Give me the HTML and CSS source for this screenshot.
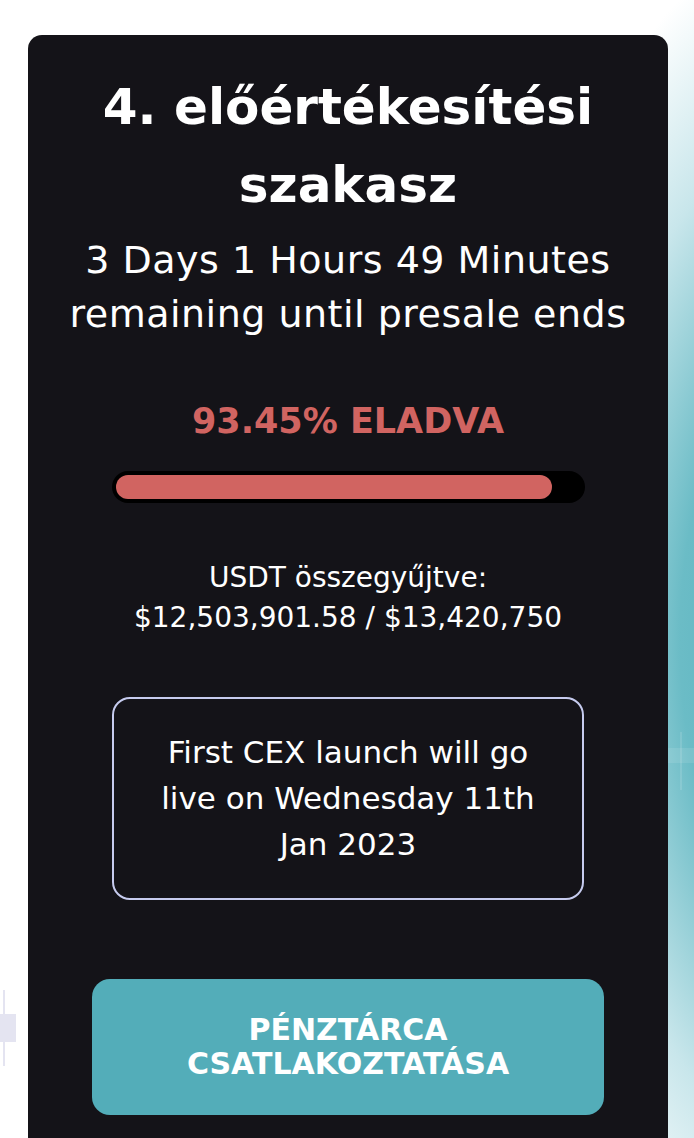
FILE: index.html
```html
<!DOCTYPE html>
<html lang="hu">
<head>
  <meta charset="UTF-8">
  <meta name="viewport" content="width=device-width, initial-scale=1.0">
  <title>Előértékesítés</title>
  <link rel="stylesheet" href="styles.css">
</head>
<body>
  <div class="candle"></div>
  <div class="cross"></div>

  <div class="card">
    <h1 class="title">4. előértékesítési szakasz</h1>
    <p class="countdown">3 Days 1 Hours 49 Minutes remaining until presale ends</p>

    <p class="sold">93.45% ELADVA</p>
    <div class="bar">
      <div class="fill" style="width: 93.8%"></div>
    </div>

    <p class="raised">USDT összegyűjtve:<br>$12,503,901.58 / $13,420,750</p>

    <div class="notice">First CEX launch will go live on Wednesday 11th Jan 2023</div>

    <button class="connect">Pénztárca csatlakoztatása</button>
  </div>
</body>
</html>
```

FILE: styles.css
```css
body {
  margin: 0;
  min-height: 1138px;
  position: relative;
  overflow: hidden;
  font-family: "DejaVu Sans", sans-serif;
  background:
    radial-gradient(ellipse 300px 700px at 800px 640px, #4fb0bd 0%, #6bbcc6 40%, #c8e6eb 72%, rgba(255, 255, 255, 0) 100%),
    #fff;
}
.candle {
  position: absolute;
  left: 3px;
  top: 990px;
  width: 2px;
  height: 76px;
  background: #e4e4f1;
}
.candle::after {
  content: "";
  position: absolute;
  left: -3px;
  top: 24px;
  width: 16px;
  height: 28px;
  background: #e4e4f1;
}
.cross {
  position: absolute;
  left: 680px;
  top: 732px;
  width: 2px;
  height: 58px;
  background: rgba(255, 255, 255, 0.12);
}
.cross::after {
  content: "";
  position: absolute;
  left: -12px;
  top: 16px;
  width: 40px;
  height: 15px;
  background: rgba(255, 255, 255, 0.1);
}
.card {
  margin: 35px 0 0 28px;
  width: 640px;
  box-sizing: border-box;
  padding: 33px 30px 40px;
  background: #141318;
  border-radius: 14px 14px 0 0;
  color: #fff;
  text-align: center;
}
.title {
  margin: 0;
  font-size: 50px;
  font-weight: 700;
  line-height: 78px;
}
.countdown {
  margin: 9px 0 0;
  font-size: 38px;
  letter-spacing: 0.5px;
  line-height: 54px;
}
.sold {
  margin: 58px 0 0;
  color: #d16461;
  font-size: 35px;
  font-weight: 700;
  line-height: 44px;
}
.bar {
  width: 473px;
  height: 32px;
  box-sizing: border-box;
  margin: 28px auto 0;
  padding: 4px;
  background: #000;
  border-radius: 16px;
}
.fill {
  height: 24px;
  background: #d16461;
  border-radius: 12px;
}
.raised {
  margin: 55px 0 0;
  font-size: 28px;
  line-height: 40px;
}
.notice {
  width: 472px;
  box-sizing: border-box;
  margin: 59px auto 0;
  padding: 30px 40px 31px;
  border: 2px solid #c6cbee;
  border-radius: 18px;
  font-size: 31px;
  line-height: 46px;
}
.connect {
  display: block;
  width: 512px;
  height: 136px;
  margin: 79px auto 0;
  padding: 0 70px;
  border: 0;
  border-radius: 18px;
  background: #53adb9;
  color: #fff;
  font-family: inherit;
  font-size: 30px;
  font-weight: 700;
  line-height: 34px;
  text-transform: uppercase;
}
```
